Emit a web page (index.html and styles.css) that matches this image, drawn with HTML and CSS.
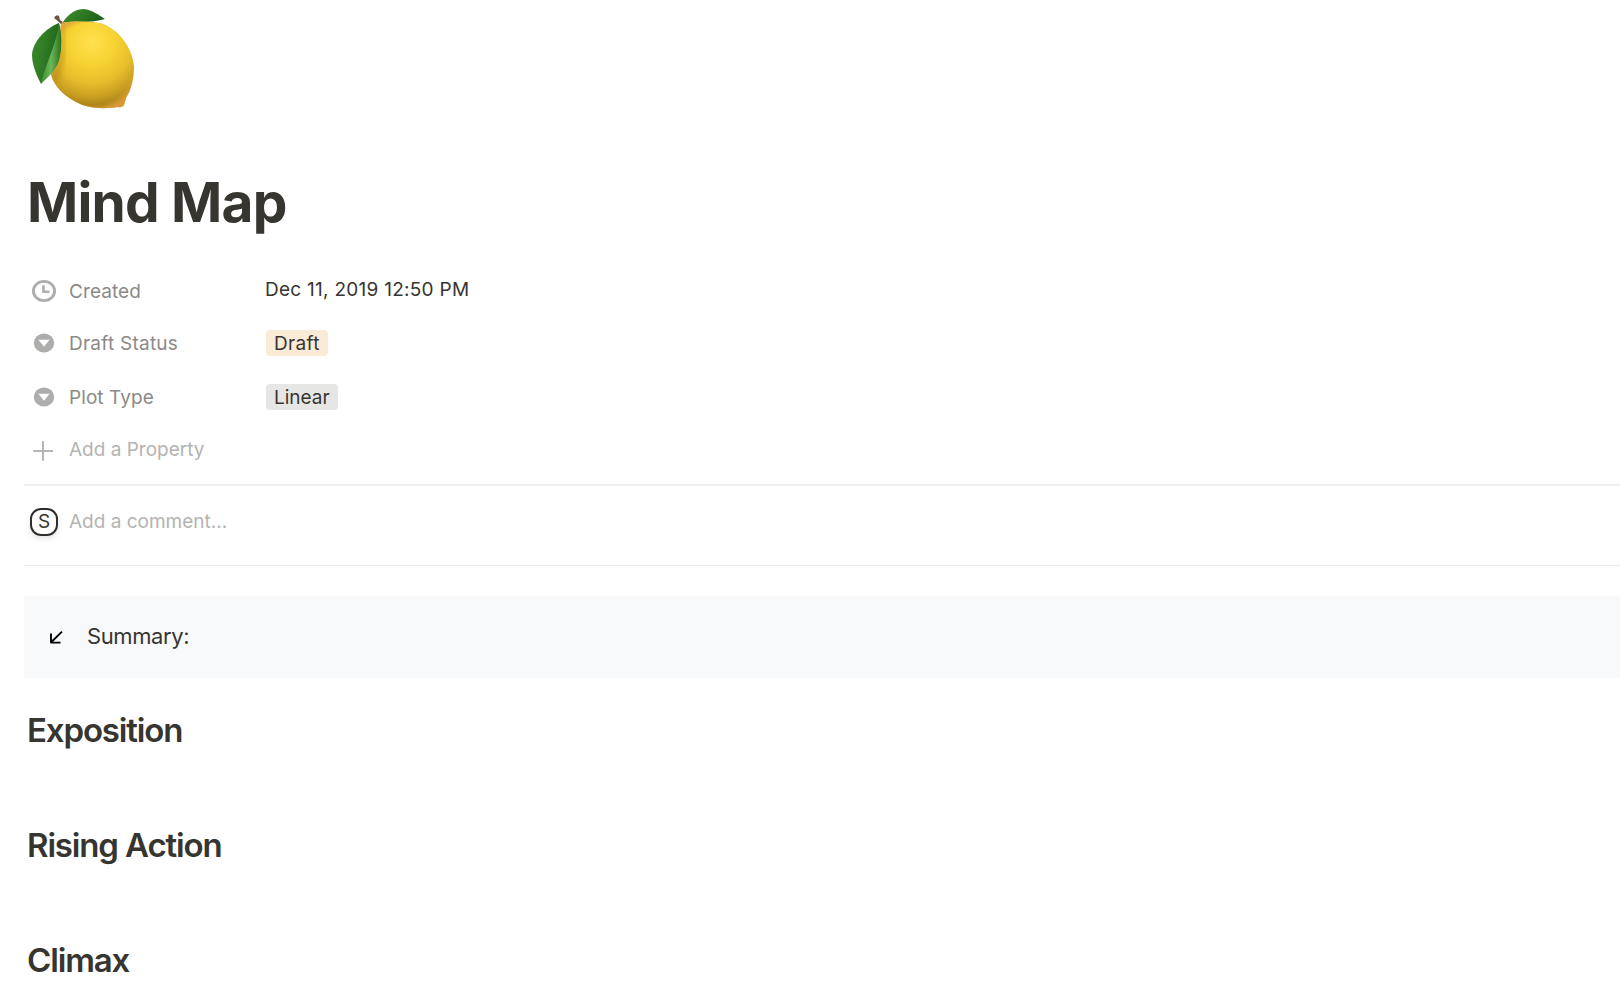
FILE: index.html
```html
<!DOCTYPE html>
<html lang="en">

<head>
    <meta charset="UTF-8">
    <meta name="viewport" content="width=device-width, initial-scale=1.0">
    <title>Mind Map</title>
    <link rel="stylesheet" href="styles.css">
</head>

<body>
    <div class="page">
        <!-- Page icon -->
        <svg class="page-icon" viewBox="0 0 160 130" width="160" height="130">
            <defs>
                <radialGradient id="lemon" gradientUnits="userSpaceOnUse" cx="92" cy="42" r="70">
                    <stop offset="0" stop-color="#ffe050"/>
                    <stop offset="0.3" stop-color="#f8d434"/>
                    <stop offset="0.58" stop-color="#e6bf2c"/>
                    <stop offset="0.8" stop-color="#c79c20"/>
                    <stop offset="0.92" stop-color="#a87f18"/>
                    <stop offset="1" stop-color="#b98a28"/>
                </radialGradient>
                <radialGradient id="rim" gradientUnits="userSpaceOnUse" cx="92" cy="64" r="47">
                    <stop offset="0.86" stop-color="#e6ae2d" stop-opacity="0"/>
                    <stop offset="1" stop-color="#dfa23c" stop-opacity="0.75"/>
                </radialGradient>
                <linearGradient id="leaf" x1="0" y1="0" x2="1" y2="0.3">
                    <stop offset="0" stop-color="#3f8a2e"/>
                    <stop offset="0.5" stop-color="#2f7c25"/>
                    <stop offset="1" stop-color="#1f6119"/>
                </linearGradient>
                <linearGradient id="leafLight" x1="0" y1="0" x2="1" y2="0">
                    <stop offset="0" stop-color="#3f9030"/>
                    <stop offset="0.5" stop-color="#6db658"/>
                    <stop offset="1" stop-color="#2c7625"/>
                </linearGradient>
                <clipPath id="lemonShape">
                    <path d="M61 23C74 21 93 21 103 24C119 30 132 47 134 66C134 79 131 90 126 98L124 105Q122 108 118 107C105 109 88 109 76 102C64 96 54 86 51 75C52 58 60 42 61 23Z"/>
                </clipPath>
                <filter id="soft">
                    <feGaussianBlur stdDeviation="3"/>
                </filter>
            </defs>
            <path d="M63 22C69 13 76 9 84 9C92 10 99 15 105 19C98 21 91 22 83 22Q72 21 63 23Z" fill="url(#leaf)"/>
            <g clip-path="url(#lemonShape)">
                <rect x="45" y="18" width="95" height="95" fill="url(#lemon)"/>
                <path d="M61 23Q65 50 51 79L54 84Q67 66 64 23Z" fill="#a97710" opacity="0.6" filter="url(#soft)"/>
                <rect x="45" y="18" width="95" height="95" fill="url(#rim)"/>
            </g>
            <path d="M59 23C46 28 33 41 32 55C32 65 37 76 41 84C46 78 55 72 59 60C62 48 62 34 59 23Z" fill="url(#leaf)"/>
            <path d="M59 24C56 44 46 64 41 83C48 77 55 72 59 60C62 48 61 34 59 24Z" fill="url(#leafLight)"/>
            <path d="M54 18Q56 14 59 16L60 20L63 22L61 24Q58 21 54 18Z" fill="#6b5547"/>
        </svg>

        <h1 class="title">Mind Map</h1>

        <!-- Properties -->
        <div class="properties">
            <div class="property">
                <svg class="icon" viewBox="0 0 28 24" width="28" height="24">
                    <ellipse cx="14" cy="12" rx="10.6" ry="9.6" fill="none" stroke="#adadac" stroke-width="2.9"/>
                    <path d="M13.5 6.2V12.8H19.5" fill="none" stroke="#adadac" stroke-width="2.6"/>
                </svg>
                <span class="label">Created</span>
                <span class="value date">Dec 11, 2019 12:50 PM</span>
            </div>
            <div class="property">
                <svg class="icon" viewBox="0 0 28 24" width="28" height="24">
                    <ellipse cx="14" cy="12" rx="10.2" ry="9.4" fill="#adadac"/>
                    <path d="M8.4 8.8H19.6L14 15.8Z" fill="#fff"/>
                </svg>
                <span class="label wide">Draft Status</span>
                <span class="value tag tag-draft">Draft</span>
            </div>
            <div class="property plot">
                <svg class="icon" viewBox="0 0 28 24" width="28" height="24">
                    <ellipse cx="14" cy="12" rx="10.2" ry="9.4" fill="#adadac"/>
                    <path d="M8.4 8.8H19.6L14 15.8Z" fill="#fff"/>
                </svg>
                <span class="label">Plot Type</span>
                <span class="value tag tag-linear">Linear</span>
            </div>
            <div class="property add">
                <svg class="icon" viewBox="0 0 28 24" width="28" height="24">
                    <path d="M3.3 14H23M13 4.2V23.7" fill="none" stroke="#b5b5b4" stroke-width="2"/>
                </svg>
                <span class="label">Add a Property</span>
            </div>
        </div>

        <!-- Comment -->
        <div class="comment">
            <span class="avatar">S</span>
            <span class="placeholder">Add a comment...</span>
        </div>

        <!-- Callout -->
        <div class="callout">
            <svg viewBox="0 0 14 14" width="14" height="14">
                <path d="M13 1.6L2.4 12M2 3.6V12.6H11.5" fill="none" stroke="#000" stroke-width="1.9" stroke-linejoin="round"/>
            </svg>
            <span>Summary:</span>
        </div>

        <h2>Exposition</h2>
        <h2>Rising Action</h2>
        <h2>Climax</h2>
    </div>
</body>

</html>
```
FILE: styles.css
```css
body {
    margin: 0;
    background-color: #fff;
    color: #373530;
    font-family: Inter, "Liberation Sans", sans-serif;
    overflow: hidden;
}

.page {
    height: 990px;
    overflow: hidden;
}

.page-icon {
    display: block;
}

.title {
    margin: 39px 0 30px 27px;
    font-size: 55px;
    line-height: 66px;
    font-weight: 700;
    letter-spacing: -0.8px;
}

.properties {
    margin-left: 24px;
    padding-bottom: 9px;
    border-bottom: 2px solid #f0f0ef;
    font-size: 19px;
    line-height: 26px;
}

.property {
    display: flex;
    align-items: center;
    height: 52px;
    padding-left: 6px;
}

.property.plot {
    margin-top: 2px;
}

.icon {
    margin-right: 11px;
}

.label {
    width: 197px;
    padding-top: 2px;
    color: #8b8a88;
    letter-spacing: 0.08px;
}

.label.wide {
    letter-spacing: 0.25px;
}

.add .label {
    color: #b3b3b1;
    letter-spacing: 0;
}

.date {
    padding-bottom: 2px;
    margin-left: -1px;
    letter-spacing: 0.27px;
}

.tag {
    height: 24px;
    padding: 2px 8px 0;
    border-radius: 4px;
    line-height: 24px;
}

.tag-draft {
    background-color: #faebd6;
    letter-spacing: 0.35px;
}

.tag-linear {
    background-color: #e6e6e4;
}

.comment {
    display: flex;
    align-items: center;
    height: 28px;
    margin-left: 24px;
    padding: 22px 0 29px 6px;
    border-bottom: 1px solid #e9e9e8;
    font-size: 19px;
}

.avatar {
    box-sizing: border-box;
    width: 28px;
    height: 28px;
    margin-right: 11px;
    border: 2px solid #2f2e2b;
    border-radius: 11px;
    box-shadow: 0 3px 5px rgba(0, 0, 0, 0.1);
    line-height: 23px;
    text-align: center;
}

.placeholder {
    padding-bottom: 2px;
    color: #b3b3b1;
}

.callout {
    display: flex;
    align-items: center;
    height: 82px;
    margin: 30px 0 32px 24px;
    padding-left: 25px;
    background-color: #f8f9fb;
    font-size: 22px;
    letter-spacing: -0.4px;
}

.callout span {
    margin-left: 24px;
    padding-bottom: 2px;
}

h2 {
    margin: 0 0 75px 27px;
    font-size: 33px;
    line-height: 40px;
    font-weight: 600;
    letter-spacing: -1.15px;
}
```
